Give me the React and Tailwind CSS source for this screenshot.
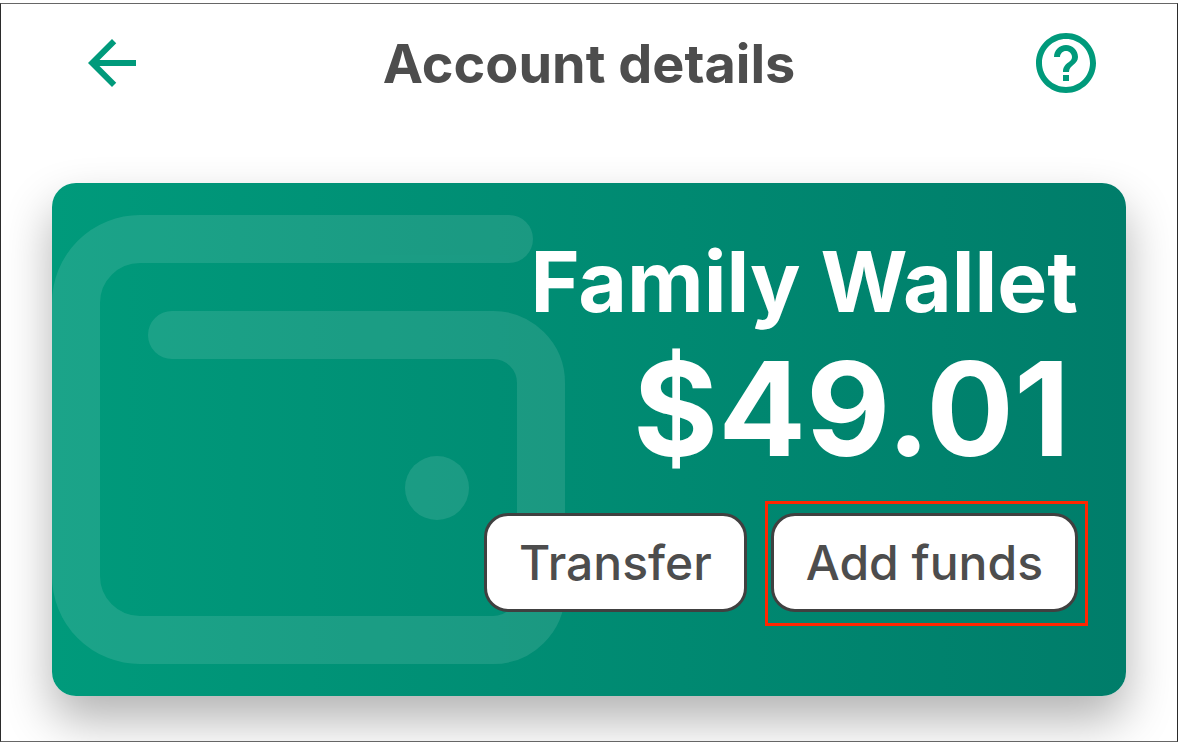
import { MdArrowBack, MdHelpOutline } from "react-icons/md";

function WalletArt() {
  return (
    <svg
      aria-hidden="true"
      className="pointer-events-none absolute top-0 left-0"
      width="513"
      height="513"
      viewBox="0 0 513 513"
      fill="none"
    >
      <g opacity="0.105">
        <path
          d="M457 56H88A64 64 0 0 0 24 120V393A64 64 0 0 0 88 457H441A48 48 0 0 0 489 409V200A48 48 0 0 0 441 152H120"
          stroke="#fff"
          strokeWidth="48"
          strokeLinecap="round"
        />
        <circle cx="385" cy="305" r="32" fill="#fff" />
      </g>
    </svg>
  );
}

function CardButton({ children }) {
  return (
    <button
      type="button"
      className="rounded-3xl border-3 border-[#404040] bg-white px-8 py-[18px] text-[48px] leading-[57px] font-medium text-[#4d4d4d]"
    >
      {children}
    </button>
  );
}

export default function App() {
  return (
    <div className="flex min-h-screen flex-col bg-white pt-[3px] pr-px font-['Inter',sans-serif] [font-optical-sizing:none]">
      <main className="flex-1 overflow-hidden border border-[#2b2b2b] border-y-[#666] px-[51px] pb-11">
        <header className="flex items-start justify-between px-6 pt-[23px]">
          <button type="button" aria-label="Back" className="text-[#009a7b]">
            <MdArrowBack size={72} />
          </button>
          <h1 className="pt-0.5 text-[54px] leading-[70px] font-bold text-[#4d4d4d]">Account details</h1>
          <button type="button" aria-label="Help" className="text-[#009a7b]">
            <MdHelpOutline size={72} />
          </button>
        </header>

        <section className="relative mt-[84px] flex flex-col items-end rounded-3xl bg-linear-to-r/srgb from-[#009a7b] to-[#007d6a] px-12 pt-12 pb-[84px] text-white shadow-[0_24px_48px_rgba(0,0,0,0.3)]">
          <WalletArt />
          <h2 className="relative text-[84px] leading-[102px] font-bold">Family Wallet</h2>
          <p className="relative pr-2 text-[130px] leading-[152px] font-bold">$49.01</p>
          <div className="relative mt-7 flex gap-6">
            <CardButton>Transfer</CardButton>
            <div className="relative">
              <CardButton>Add funds</CardButton>
              <div className="pointer-events-none absolute -top-3 -right-2.5 -bottom-3.5 -left-1.5 border-3 border-[#ff2600]" />
            </div>
          </div>
        </section>
      </main>
    </div>
  );
}
